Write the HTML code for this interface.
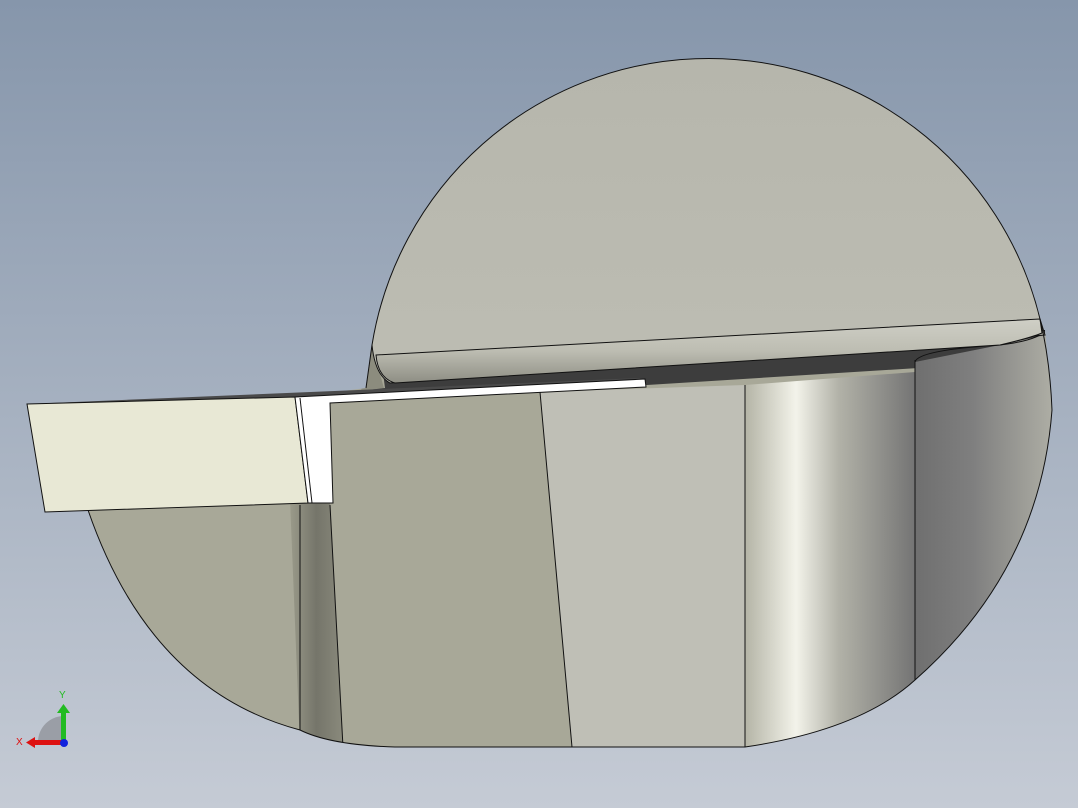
<!DOCTYPE html>
<html><head><meta charset="utf-8"><style>
html,body{margin:0;padding:0;width:1078px;height:808px;overflow:hidden}
</style></head><body>
<svg width="1078" height="808" viewBox="0 0 1078 808" xmlns="http://www.w3.org/2000/svg">
<defs>
<linearGradient id="bg" x1="0" y1="0" x2="0" y2="1">
<stop offset="0" stop-color="#8696ab"/><stop offset="1" stop-color="#c5cbd5"/></linearGradient>
<linearGradient id="disc" x1="0" y1="0" x2="0" y2="1">
<stop offset="0" stop-color="#b6b6ac"/><stop offset="1" stop-color="#bdbdb3"/></linearGradient>
<linearGradient id="fil" x1="0" y1="0" x2="0" y2="1">
<stop offset="0" stop-color="#cfcfc6"/><stop offset="0.5" stop-color="#bdbdb2"/><stop offset="1" stop-color="#8e8e84"/></linearGradient>
<linearGradient id="cyl" x1="0" y1="0" x2="1" y2="0">
<stop offset="0" stop-color="#b4b4a6"/><stop offset="0.3" stop-color="#f3f3ea"/><stop offset="0.55" stop-color="#b2b2a8"/><stop offset="1" stop-color="#747474"/></linearGradient>
<linearGradient id="rt" x1="0" y1="0" x2="1" y2="0">
<stop offset="0" stop-color="#6f6f6f"/><stop offset="0.4" stop-color="#7f7f7f"/><stop offset="1" stop-color="#b2b2a8"/></linearGradient>
<linearGradient id="strip" x1="0" y1="0" x2="1" y2="0">
<stop offset="0" stop-color="#9a9a8a"/><stop offset="0.5" stop-color="#75756a"/><stop offset="1" stop-color="#8a8a7c"/></linearGradient>
<clipPath id="body"><path d="M88,510 Q150,690 300,730 Q330,745 395,747 L745,747 Q860,730 915,680 Q1040,570 1052,410 L1045,330 L372,345 L366,388 L290,398 L88,510 Z"/></clipPath>
</defs>
<rect width="1078" height="808" fill="url(#bg)"/>
<g clip-path="url(#body)">
<rect x="0" y="300" width="1078" height="500" fill="#a8a898"/>
<polygon points="360,395 372,345 385,392" fill="#8c8c7e"/>
<polygon points="380,350 1045,325 1045,360 330,405 300,398 385,388" fill="#3d3d3d"/>
<polygon points="290,500 330,500 343,747 300,747" fill="url(#strip)"/>
<polygon points="330,403 540,392 572,747 343,747" fill="#a8a898"/>
<polygon points="540,392 745,385 745,747 572,747" fill="#bfbfb6"/>
<polygon points="745,385 915,372 915,747 745,747" fill="url(#cyl)"/>
<polygon points="915,362 1000,345 1045,335 1060,335 1060,747 915,747" fill="url(#rt)"/>
<path d="M540,392 L572,747 M745,385 L745,747 M915,360 L915,747 M300,505 L300,747 M330,505 L343,747" stroke="#111" stroke-width="1" fill="none"/>
<path d="M915,362 Q918,350 1000,345 Q1040,340 1045,330" stroke="#111" fill="none"/>
</g>
<!-- upper disc -->
<path d="M372,345 A341,341 0 0 1 1040,319 L1045,335 L390,383 Q375,375 372,345 Z" fill="url(#disc)" stroke="#111" stroke-width="1"/>
<path d="M376,355 L1040,319 L1042,333 Q1030,338 1000,345 L395,383 Q378,378 376,355 Z" fill="url(#fil)" stroke="#111" stroke-width="1"/>
<path d="M88,510 Q150,690 300,730 Q330,745 395,747 L745,747 Q860,730 915,680 Q1040,570 1052,410 Q1050,360 1040,319" fill="none" stroke="#111" stroke-width="1"/>
<path d="M372,345 L366,388" stroke="#111" fill="none"/>
<!-- tool -->
<polygon points="27,404 640,378 645,386 300,401" fill="#4a4a4a"/>
<polygon points="27,404 295,397 308,503 45,512" fill="#e8e8d5" stroke="#111" stroke-width="1"/>
<polygon points="295,397 645,379 646,387 330,403 333,503 308,503" fill="#ffffff" stroke="#111" stroke-width="1"/>
<line x1="300" y1="398" x2="312" y2="503" stroke="#111"/>
<!-- axis -->
<path d="M64,742 L38,742 A26,26 0 0 1 64,716 Z" fill="#9a9ea6"/>
<rect x="61" y="712" width="5" height="30" fill="#22bb22"/>
<polygon points="57,713 63.5,704 70,713" fill="#22bb22"/>
<rect x="34" y="740" width="30" height="5" fill="#dd1111"/>
<polygon points="35,737 26,742.5 35,748" fill="#dd1111"/>
<circle cx="64" cy="743" r="4" fill="#1122dd"/>
<text x="59" y="698" font-family="Liberation Sans, sans-serif" font-size="10" fill="#22bb22">Y</text>
<text x="16" y="745" font-family="Liberation Sans, sans-serif" font-size="10" fill="#dd1111">X</text>
</svg>
</body></html>
